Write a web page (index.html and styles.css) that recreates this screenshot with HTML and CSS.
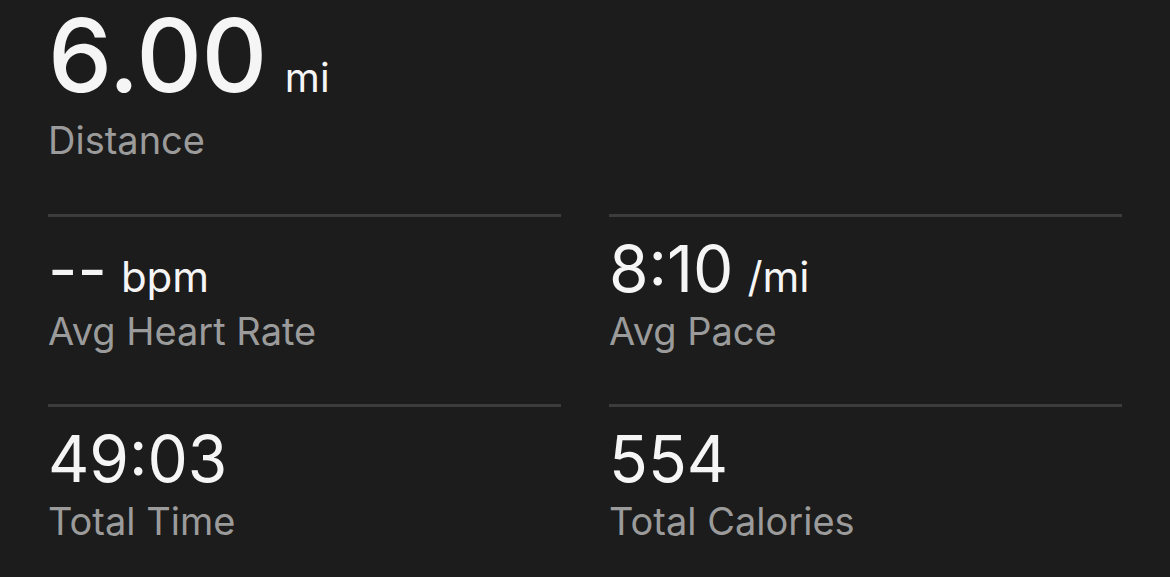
FILE: index.html
```html
<!DOCTYPE html>
<html>
<head>
<meta charset="utf-8">
<link rel="stylesheet" href="styles.css">
</head>
<body>
<main class="page">
  <section class="hero">
    <div class="hero-value"><span class="big">6.00</span><span class="unit-big">mi</span></div>
    <div class="label hero-label">Distance</div>
  </section>
  <section class="grid">
    <div class="cell">
      <div class="value"><span class="num">--</span><span class="unit">bpm</span></div>
      <div class="label">Avg Heart Rate</div>
    </div>
    <div class="cell">
      <div class="value"><span class="num">8:10</span><span class="unit">/mi</span></div>
      <div class="label">Avg Pace</div>
    </div>
    <div class="cell">
      <div class="value"><span class="num">49:03</span></div>
      <div class="label">Total Time</div>
    </div>
    <div class="cell">
      <div class="value"><span class="num">554</span></div>
      <div class="label">Total Calories</div>
    </div>
  </section>
</main>
</body>
</html>
```
FILE: styles.css
```css
html, body {
  margin: 0;
  padding: 0;
  background: #1c1c1c;
}
body {
  font-family: Inter, "Noto Sans", sans-serif;
  color: #f5f5f5;
  width: 1170px;
  height: 577px;
  overflow: hidden;
}
.page {
  padding: 0 48px;
}
.hero {
  padding-top: 5px;
  height: 214px;
  box-sizing: border-box;
}
.hero-value {
  display: flex;
  align-items: baseline;
  line-height: 100px;
}
.big {
  font-size: 102px;
  font-weight: 500;
  letter-spacing: -0.5px;
}
.unit-big {
  font-size: 40px;
  line-height: 40px;
  margin-left: 18px;
}
.label {
  color: #9b9b9b;
  font-size: 38px;
  line-height: 40px;
  margin-top: 10px;
}
.hero-label {
  margin-top: 15px;
}
.grid {
  display: grid;
  grid-template-columns: 513px 513px;
  column-gap: 48px;
}
.cell {
  border-top: 3px solid #3c3c3c;
  height: 190px;
  box-sizing: border-box;
  padding-top: 20px;
}
.value {
  display: flex;
  align-items: baseline;
  line-height: 64px;
}
.num {
  font-size: 64px;
}
.unit {
  font-size: 42px;
  line-height: 42px;
  margin-left: 14px;
}
```
